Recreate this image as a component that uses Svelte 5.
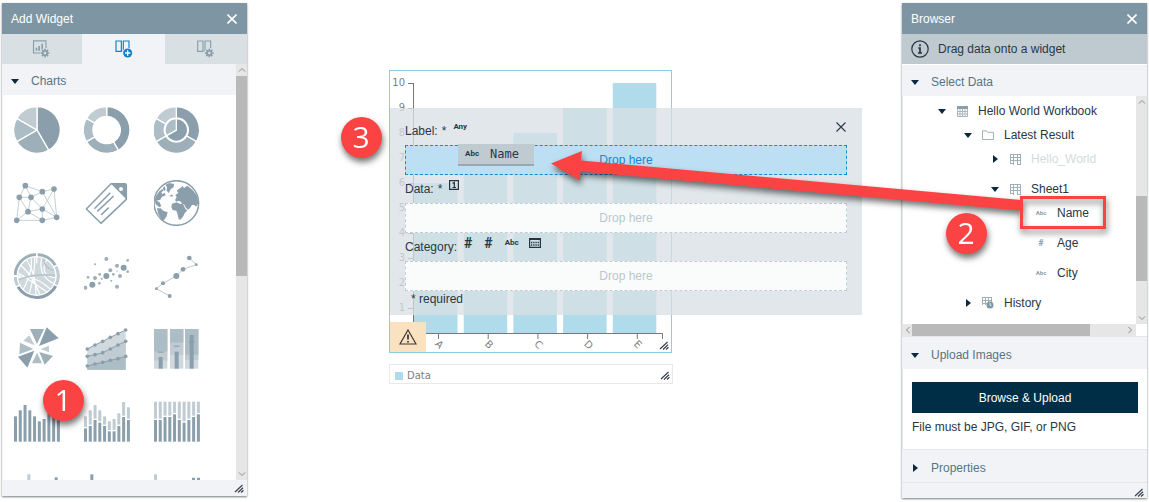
<script>
  const dark = '#8a9fab';
  const mid = '#9dafb9';
  const soft = '#adbdc5';
  const pale = '#c0cbd2';

  function sector(cx, cy, r0, r1, from, to) {
    const at = (r, deg) => {
      const t = ((deg - 90) * Math.PI) / 180;
      return `${(cx + r * Math.cos(t)).toFixed(2)} ${(cy + r * Math.sin(t)).toFixed(2)}`;
    };
    const big = to - from > 180 ? 1 : 0;
    const inner = r0 ? `L${at(r0, to)}A${r0} ${r0} 0 ${big} 0 ${at(r0, from)}` : `L${cx} ${cy}`;
    return `M${at(r1, from)}A${r1} ${r1} 0 ${big} 1 ${at(r1, to)}${inner}Z`;
  }

  const split = [[0, 150, dark], [150, 240, mid], [240, 300, soft], [300, 360, pale]];
  const ring = [[0, 120, dark], [120, 240, mid], [240, 300, soft], [300, 360, pale]];

  const nodes = [[76, 77], [162, 87], [127, 95], [58, 112], [93, 112], [84, 155], [127, 147], [50, 181], [127, 181], [170, 172]];
  const edges = [[0, 2], [0, 3], [0, 4], [1, 2], [2, 4], [3, 4], [3, 7], [3, 5], [4, 5], [4, 6], [5, 7], [5, 6], [5, 8], [6, 8], [7, 8], [8, 9], [6, 9], [2, 9], [1, 9], [1, 6]];

  const dots = [[319, 297, 6], [285, 313, 3], [383, 301, 4], [351, 317, 6], [371, 323, 9], [383, 335, 4], [331, 331, 6], [351, 333, 2], [319, 348, 9], [340, 343, 4], [360, 348, 6], [299, 343, 4], [285, 354, 6], [264, 352, 4], [305, 356, 3], [334, 362, 3], [298, 370, 4], [277, 374, 9], [256, 383, 6], [351, 380, 6]];
  const path = [[568, 294, 7], [589, 314, 4], [549, 328, 7], [529, 348, 9], [489, 370, 6], [469, 386, 4], [509, 408, 6]];

  const areaX = [262, 285, 308, 331, 354, 377];
  const areas = [
    { y: [87, 75, 64, 52, 41, 30], fill: '#d0d9de' },
    { y: [109, 104, 98, 87, 75, 64], fill: '#c0cbd2' },
    { y: [138, 132, 127, 121, 116, 109], fill: '#adbdc5' }
  ];
  const wedges = [
    ['90,27 132,27 111,72', mid], ['140,22 176,55 117,78', dark], ['147,77 147,97 122,87', pale],
    ['159,108 134,134 118,96', mid], ['111,98 126,130 96,130', soft], ['103,92 82,143 54,110', dark],
    ['100,87 60,68 58,103', soft], ['70,62 88,46 104,76', pale]
  ];
  const bullets = [[462, 95, 122, 111, 97], [510, 68, 105, 95, 79], [555, 104, 120, 45, 66]];

  const tall = [289, 271, 255, 271, 289, 304, 297, 280, 246, 262];
  const low = [325, 318, 300, 308, 318, 334, 334, 318, 291, 300];
  const full = [300, 300, 291, 291, 283, 300, 308, 300, 291, 283];

  const widgets = [
    ['Pie chart', 'pie', '42 321'], ['Donut chart', 'donut', '252 321'], ['Nested pie chart', 'nested', '462 321'],
    ['Network', 'network', '42 60'], ['Tag', 'tag', '252 60'], ['Map', 'globe', '462 60'],
    ['Chord', 'chord', '42 279'], ['Scatter plot', 'scatter', '252 279'], ['Connected scatter', 'connected', '462 279'],
    ['Rose chart', 'rose', '42 18'], ['Area chart', 'area', '252 18'], ['Bullet chart', 'bullet', '462 18'],
    ['Bar chart', 'bars', '42 237'], ['Stacked bars', 'stacked', '250 237'], ['Percent bars', 'percent', '460 237'],
    ['Histogram', 'more1', '42 456'], ['Range bars', 'more2', '252 456'], ['Grouped bars', 'more3', '460 456']
  ];

  const series = [['A', 6], ['B', 7], ['C', 8], ['D', 9], ['E', 10]];
  const ticks = [1, 2, 3, 4, 5, 6, 7, 8, 9, 10];

  const tree = [
    { label: 'Hello World Workbook', level: 0, icon: 'table', open: true },
    { label: 'Latest Result', level: 1, icon: 'folder', open: true },
    { label: 'Hello_World', level: 2, icon: 'sheet', open: false, muted: true },
    { label: 'Sheet1', level: 2, icon: 'sheet', open: true, gap: true },
    { label: 'Name', level: 3, icon: 'Abc' },
    { label: 'Age', level: 3, icon: '#', gap: true },
    { label: 'City', level: 3, icon: 'Abc', gap: true },
    { label: 'History', level: 1, icon: 'history', open: false, gap: true }
  ];
</script>

{#snippet grip()}
  <svg class="grip" viewBox="0 0 10 9" width="10" height="9" aria-hidden="true">
    <path d="M1 8 8.500 1M4 8.500 9 3.800M7 8.500 9.500 6.200" stroke="#39434f" stroke-width="1.200" fill="none" />
  </svg>
{/snippet}

{#snippet cross(weight)}
  <svg viewBox="0 0 10 10" width="10" height="10" aria-hidden="true">
    <path d="M.5 .5 9.500 9.500M9.500 .5 .5 9.500" stroke="currentColor" stroke-width={weight} fill="none" />
  </svg>
{/snippet}

{#snippet caret(open)}
  <svg class="caret" viewBox="0 0 8 8" width="8" height="8" aria-hidden="true">
    {#if open}<path d="M0 2H8L4 7Z" fill="#0b2a42" />{:else}<path d="M2 0V8L7 4Z" fill="#0b2a42" />{/if}
  </svg>
{/snippet}

{#snippet chevron(turn)}
  <svg viewBox="0 0 8 8" width="8" height="8" aria-hidden="true">
    <path d="M1 5.500 4 2.500 7 5.500" transform="rotate({turn} 4 4)" stroke="#8b8b8b" fill="none" />
  </svg>
{/snippet}

{#snippet gear(x, y, back)}
  <circle cx={x} cy={y} r="15" fill={back} />
  <circle cx={x} cy={y} r="6.500" fill="none" stroke={dark} stroke-width="5" />
  {#each [0, 45, 90, 135, 180, 225, 270, 315] as a}
    <rect x={x - 2.5} y={y - 13} width="5" height="6" fill={dark} transform="rotate({a} {x} {y})" />
  {/each}
{/snippet}

{#snippet typeIcon(name)}
  {#if name === 'table'}
    <svg viewBox="0 0 11 11" width="11" height="11" aria-hidden="true">
      <path d="M.5 .5H10.500V10.500H.5ZM3 3V10.500M5.500 3V10.500M8 3V10.500M.5 5.500H10.500M.5 8H10.500" fill="none" stroke="#a9b7bf" />
      <path d="M0 0H11V3H0Z" fill="#8a9fab" />
    </svg>
  {:else if name === 'folder'}
    <svg viewBox="0 0 12 10" width="12" height="10" aria-hidden="true">
      <path d="M.5 9.500V.8H4.500L5.500 2.300H11.500V9.500Z" fill="none" stroke="#a3b3bc" />
    </svg>
  {:else if name === 'sheet'}
    <svg viewBox="0 0 11 11" width="11" height="11" aria-hidden="true">
      <path d="M.5 0V10M3.500 0V11M7.500 0V11M10.500 0V10M0 .5H11M0 3.500H11M0 6.500H11M0 9.500H4M7 10.500H11" fill="none" stroke="#9fb0b9" />
    </svg>
  {:else if name === 'history'}
    <svg viewBox="0 0 12 12" width="12" height="12" aria-hidden="true">
      <path d="M.5 0V8M3.500 0V8M6.500 0V5M9.500 0V5M0 .5H10M0 3.500H10M0 6.500H5" fill="none" stroke="#9fb0b9" />
      <circle cx="8" cy="8" r="3.500" fill="#7f96a3" /><path d="M8 6V8.300H9.500" stroke="#fff" stroke-width=".8" fill="none" />
    </svg>
  {:else}
    <span class="kind" class:num={name === '#'}>{name}</span>
  {/if}
{/snippet}

{#snippet slices(list, cx, cy, r0, r1)}
  {#each list as [a, b, fill]}
    <path d={sector(cx, cy, r0, r1, a, b)} {fill} stroke="#fff" stroke-width="4" />
  {/each}
{/snippet}

{#snippet columns(x0, tops, bottom, fill)}
  {#each tops as top, i}
    <rect x={x0 + i * 14.3} y={top} width="9" height={(Array.isArray(bottom) ? bottom[i] - 4 : bottom) - top} {fill} />
  {/each}
{/snippet}

{#snippet picture(kind)}
  {#if kind === 'pie'}
    {@render slices(split, 111, 390, 0, 70)}
  {:else if kind === 'donut'}
    {@render slices(split, 320, 390, 41, 70)}
  {:else if kind === 'nested'}
    {@render slices(ring, 529, 390, 36, 70)}
    {@render slices([[0, 240, dark], [240, 360, soft]], 529, 390, 0, 34)}
  {:else if kind === 'network'}
    {#each edges as [a, b]}
      <line x1={nodes[a][0]} y1={nodes[a][1]} x2={nodes[b][0]} y2={nodes[b][1]} stroke="#c6d0d5" stroke-width="3" />
    {/each}
    {#each nodes as [x, y]}<circle cx={x} cy={y} r="8.500" fill={dark} />{/each}
  {:else if kind === 'tag'}
    <path d="M333 71H375Q379 71 379 75V118L303 190L259 147Z" fill="none" stroke={dark} stroke-width="4.500" stroke-linejoin="round" />
    <path d="M333 71H375Q379 71 379 75V118Z" fill={dark} />
    <circle cx="363" cy="87" r="6" fill="#fff" />
    <path d="M283 146 331 98M292 154 341 108M303 165 326 143" stroke={dark} stroke-width="4.500" fill="none" />
  {:else if kind === 'globe'}
    <circle cx="529" cy="129" r="67" fill="#fff" stroke={dark} stroke-width="4.500" />
    <path fill={dark} d="M541 84 548 78 552 84 562 77 578 90 590 106 596 128 588 140 582 134 575 136 570 145 563 149 557 142 552 133 545 131 543 125 535 122 530 125 525 121 530 111 526 106 535 98 530 92 535 88ZM516 131 530 127 541 132 549 132 557 148 562 151 554 160 549 170 541 179 536 178 533 164 529 152 518 150 514 141ZM471 145 482 145 490 152 503 157 500 169 492 181 487 183 481 173 474 160ZM469 122 478 126 484 138 478 142 467 133 464 120 468 108 478 94 487 87 490 93 484 96 487 103 494 98 497 106 485 111 481 119ZM496 74 508 69 522 72 521 81 512 88 506 99 500 92 501 82ZM488 84 494 79 497 89 492 94ZM512 104 519 105 517 110 510 109Z" />
  {:else if kind === 'chord'}
    <circle cx="110" cy="348" r="57" fill="#cfd8dc" />
    <path fill="none" stroke="#fff" stroke-width="3.500" d="M62 315Q100 350 120 404M80 300Q110 345 108 406M104 290Q106 340 88 400M125 292Q112 350 165 372M140 300Q115 345 167 354M54 352Q105 345 152 388M54 338Q90 360 142 397M93 294Q100 330 70 388" />
    <path fill="none" stroke="#b9c6cd" stroke-width="5" d="M130 294Q135 330 164 330M55 360Q100 340 166 346" />
    {@render slices([[0, 62, mid], [62, 116, pale], [116, 242, dark], [242, 270, pale], [270, 360, mid]], 110, 348, 58, 71)}
    <path d="M110 278V310M42 348H62" stroke="#fff" stroke-width="4" />
  {:else if kind === 'scatter'}
    {#each dots as [x, y, r]}<circle cx={x} cy={y} {r} fill={r > 6 ? dark : mid} />{/each}
  {:else if kind === 'connected'}
    <polyline points={path.map(([x, y]) => `${x},${y}`).join(' ')} fill="none" stroke="#bcc8cf" stroke-width="3" />
    {#each path as [x, y, r]}<circle cx={x} cy={y} {r} fill={dark} />{/each}
  {:else if kind === 'rose'}
    {#each wedges as [points, fill]}<polygon {points} {fill} />{/each}
  {:else if kind === 'area'}
    {#each areas as { y, fill }}
      <polygon points={`262,149 ${areaX.map((x, i) => `${x},${y[i]}`).join(' ')} 377,149`} {fill} />
    {/each}
    {#each areas as { y }}
      <polyline points={areaX.map((x, i) => `${x},${y[i]}`).join(' ')} fill="none" stroke={dark} stroke-width="3" />
      {#each areaX as x, i}<circle cx={x} cy={y[i]} r="5.500" fill={dark} />{/each}
    {/each}
  {:else if kind === 'bullet'}
    {#each bullets as [x, a, b, top, mark]}
      <rect {x} y="27" width="40" height="119" fill="#d0d9de" />
      <rect {x} y="27" width="40" height={b - 27} fill={pale} />
      <rect {x} y="27" width="40" height={a - 27} fill={soft} />
      <rect x={x + 14} y={top} width="12" height={146 - top} fill={dark} />
      <rect x={x + 11} y={mark - 2} width="18" height="3" fill={dark} />
    {/each}
  {:else if kind === 'bars'}
    {@render columns(42, tall, 365, dark)}
  {:else if kind === 'stacked'}
    {@render columns(250, tall, low, pale)}
    {@render columns(250, low, 365, dark)}
  {:else if kind === 'percent'}
    {@render columns(460, full.map(() => 245), full, pale)}
    {@render columns(460, full, 365, dark)}
  {:else if kind === 'more1'}
    <path d="M82 463H91V594H82Z" fill={pale} /><path d="M164 472H173V594H164Z" fill={dark} />
  {:else if kind === 'more2'}
    <path d="M271 463H280V594H271Z" fill={dark} />
  {:else}
    <path d="M460 463H469V594H460Z" fill={pale} /><path d="M574 473H583V594H574ZM589 473H598V594H589Z" fill={dark} />
  {/if}
{/snippet}

<main class="page">
  <section class="panel left" aria-label="Add Widget">
    <header class="title">
      <h2>Add Widget</h2>
      <button aria-label="Close">{@render cross(1.6)}</button>
    </header>
    <div class="tabs">
      <button aria-label="Widget settings">
        <svg viewBox="99 120 60 60" width="20" height="20" aria-hidden="true">
          <path d="M103.500 125.500H141V162H103.500Z" fill="none" stroke={dark} stroke-width="3.500" />
          <path d="M110 146H115V155H110ZM118 141H123V155H118ZM127 134H132V155H127Z" fill={dark} />
          {@render gear(138, 162, '#d9e0e4')}
        </svg>
      </button>
      <button class="on" aria-label="Add widget">
        <svg viewBox="342 120 60 60" width="20" height="20" aria-hidden="true">
          <path d="M348 126H364V157H348ZM370 126H387V157H370Z" fill="none" stroke="#0c82cc" stroke-width="3.500" />
          <circle cx="383" cy="162" r="16" fill="#f1f3f6" /><circle cx="383" cy="162" r="13.500" fill="#0c82cc" />
          <path d="M383 154V170M375 162H391" stroke="#fff" stroke-width="4" />
        </svg>
      </button>
      <button aria-label="Layout settings">
        <svg viewBox="590 120 60 60" width="20" height="20" aria-hidden="true">
          <path d="M595 126H611V157H595ZM617 126H634V157H617Z" fill="none" stroke={dark} stroke-width="3.500" />
          {@render gear(630, 162, '#d9e0e4')}
        </svg>
      </button>
    </div>
    <div class="scroller">
      <div class="content">
        <button class="section">{@render caret(true)}Charts</button>
        <div class="grid">
          {#each widgets as [label, kind, origin]}
            <button aria-label={label}>
              <svg viewBox="{origin} 138 138" width="46" height="46" aria-hidden="true">{@render picture(kind)}</svg>
            </button>
          {/each}
        </div>
      </div>
      <div class="bar">
        {@render chevron(0)}
        <div class="track"><i class="thumb" style="top:0%;height:51%"></i></div>
        {@render chevron(180)}
      </div>
    </div>
    <footer>{@render grip()}</footer>
  </section>

  <section class="canvas" aria-label="Canvas">
    <div class="chart">
      <svg viewBox="0 0 281 281" width="281" height="281" role="img" aria-label="Bar chart of Data">
        {#each series as [name, value], i}
          <rect x={24 + i * 49.7} y={262 - value * 25} width="43.500" height={value * 25} fill="#afdbea" />
          <path d="M{48.5 + i * 49.7} 262V268" class="axis" />
          <text x={48 + i * 49.7} y="270" transform="rotate(45 {48 + i * 49.7} 270)" dy="5">{name}</text>
        {/each}
        {#each ticks as t}
          <path d="M18 {262.5 - t * 25}H23" class="axis" />
          <text x="15" y={265 - t * 25} text-anchor="end">{t}</text>
        {/each}
        <path d="M23.500 12V262.500H272.500V268" class="axis" />
      </svg>
      <div class="warn">
        <svg viewBox="0 0 18 16" width="18" height="16" aria-hidden="true">
          <path d="M9 1 17 15H1Z" fill="none" stroke="#3d3a36" stroke-width="1.200" />
          <path d="M9 5.500V10.500M9 12V13.500" stroke="#3d3a36" stroke-width="1.800" />
        </svg>
      </div>
      {@render grip()}
    </div>
    <div class="legend"><i></i>Data{@render grip()}</div>

    <div class="mapping">
      <button class="close" aria-label="Close">{@render cross(1.1)}</button>
      <div class="field"><span>Label:</span><span>*</span><b class="any">Any</b></div>
      <div class="drop active">Drop here</div>
      <div class="field">
        <span>Data:</span><span>*</span>
        <svg class="kinds" viewBox="0 0 10 10" width="10" height="10" aria-hidden="true">
          <path d="M.6 .6H9.400V9.400H.6ZM3.500 3.300 5.300 2.500V7.500M3.500 7.500H7" fill="none" stroke="#27333f" stroke-width="1.200" />
        </svg>
      </div>
      <div class="drop">Drop here</div>
      <div class="field">
        <span>Category:</span>
        <b class="hash">#</b><b class="hash">#</b><b class="any">Abc</b>
        <svg class="kinds" viewBox="0 0 12 10" width="12" height="10" aria-hidden="true">
          <path d="M.6 .6H11.400V9.400H.6Z" fill="none" stroke="#27333f" stroke-width="1.200" />
          <path d="M0 1.200H12" stroke="#27333f" stroke-width="1.600" />
          <path d="M2 4.500H10M2 7H10" stroke="#27333f" stroke-width="1.500" stroke-dasharray="1.300 .9" />
        </svg>
      </div>
      <div class="drop">Drop here</div>
      <p>* required</p>
      <div class="chip"><b>Abc</b>Name</div>
    </div>
  </section>

  <section class="panel right" aria-label="Browser">
    <header class="title">
      <h2>Browser</h2>
      <button aria-label="Close">{@render cross(1.6)}</button>
    </header>
    <div class="info">
      <svg viewBox="0 0 18 18" width="18" height="18" aria-hidden="true">
        <circle cx="9" cy="9" r="8.200" fill="none" stroke="#27333f" stroke-width="1.200" />
        <path d="M9 4.200V6.200M7.300 8H9V13M7 13H11" fill="none" stroke="#27333f" stroke-width="1.700" />
      </svg>
      Drag data onto a widget
    </div>
    <button class="section">{@render caret(true)}Select Data</button>
    <div class="browse">
      <ul class="tree">
        {#each tree as row}
          <li class="level{row.level}" class:muted={row.muted} class:gap={row.gap}>
            {#if row.level < 3}{@render caret(row.open)}{/if}
            <span class="icon">{@render typeIcon(row.icon)}</span>
            <span>{row.label}</span>
          </li>
        {/each}
      </ul>
      <div class="bar">
        {@render chevron(0)}
        <div class="track"><i class="thumb" style="top:43%;height:42%"></i></div>
        {@render chevron(180)}
      </div>
      <div class="hbar">
        {@render chevron(270)}
        <div class="track"><i class="thumb" style="left:0;width:83%"></i></div>
        {@render chevron(90)}
      </div>
    </div>
    <button class="section ruled">{@render caret(true)}Upload Images</button>
    <div class="upload">
      <button>Browse &amp; Upload</button>
      <p>File must be JPG, GIF, or PNG</p>
    </div>
    <button class="section ruled">{@render caret(false)}Properties</button>
    <footer class="ruled">{@render grip()}</footer>
  </section>

  <svg class="notes" width="1149" height="502" aria-hidden="true">
    <rect x="1021.500" y="197.500" width="83" height="30" fill="none" stroke="#fc4343" stroke-width="3" />
    <g fill="#fc4343">
      <path d="M551 163.500 582 151 581 160.500 1018.500 199.800A5.300 5.300 0 0 1 1017.500 210.300L580.500 171.500 580 180.500Z" />
      <circle cx="63.500" cy="400.500" r="20.500" />
      <circle cx="966.500" cy="233.500" r="20.500" />
      <circle cx="361.500" cy="137.500" r="20.500" />
    </g>
    <g class="digit">
      <text x="63" y="411">1</text>
      <text x="966" y="244">2</text>
      <text x="361" y="148">3</text>
    </g>
  </svg>
</main>

<style>
  :global(body) { margin: 0; background: #fff; }
  * { box-sizing: border-box; }
  .page {
    position: relative; display: flex; height: 100vh; min-height: 480px; padding: 3px 2px 4px; overflow: hidden;
    font: 12px/16px "Liberation Sans", Arial, sans-serif; color: #2a3744;
  }
  button { margin: 0; padding: 0; border: 0; background: none; font: inherit; color: inherit; cursor: pointer; }
  svg { display: block; flex: none; }
  h2, p { margin: 0; font: inherit; }
  .panel { display: flex; flex: none; flex-direction: column; width: 245px; background: #fff; box-shadow: 0 1px 2px #777c80; }
  .left { margin-bottom: 2px; }
  .title { display: flex; flex: none; align-items: center; justify-content: space-between; height: 31px; padding: 0 10px 0 9px; background: #7e96a4; color: #fff; }
  .tabs { display: grid; flex: none; grid-template-columns: 80fr 83fr 82fr; height: 30px; }
  .tabs button { display: grid; place-items: center; background: #d9e0e4; }
  .tabs .on { background: #f1f3f6; }
  .section { display: flex; flex: none; align-items: center; gap: 12px; width: 100%; height: 31px; padding: 2px 9px 0; background: #f1f3f6; color: #5a7484; text-align: left; }
  .ruled { border-top: 1px solid #e4e8eb; height: 33px; }
  .scroller { display: flex; flex: 1; min-height: 0; }
  .content { display: flex; flex: 1; flex-direction: column; min-width: 0; overflow: hidden; border-left: 1px solid #f1f3f6; }
  .content .section { padding-left: 8px; }
  .grid { display: grid; grid-template-columns: repeat(3, 46px); gap: 27px 24px; padding: 12px 11px; }
  .bar { display: flex; flex-direction: column; align-items: center; width: 11px; padding: 2px 0; background: #e6e6e6; }
  .track { position: relative; flex: 1; align-self: stretch; margin: 2px 0; }
  .thumb { position: absolute; width: 100%; height: 100%; background: #b9b9b9; }
  footer { display: flex; flex: none; align-items: center; justify-content: flex-end; height: 16px; padding-right: 3px; background: #f1f3f6; }
  footer.ruled { height: 16px; }

  .canvas { position: relative; flex: 1; min-width: 0; }
  .chart { position: absolute; left: 142px; top: 67px; width: 283px; border: 1px solid #8ccde6; }
  .chart text { font: 10px "DejaVu Sans", sans-serif; fill: #808080; }
  .axis { fill: none; stroke: #777; }
  .warn { position: absolute; left: 0; bottom: 0; display: grid; place-items: center; width: 36px; height: 30px; background: #fae1bf; }
  .chart > :global(.grip) { position: absolute; right: 2px; bottom: 2px; }
  .legend { position: absolute; left: 142px; top: 361px; display: flex; align-items: center; gap: 4px; width: 284px; height: 20px; padding: 3px 2px 0 5px; border: 1px solid #e9e9e9; font: 10px/12px "DejaVu Sans", sans-serif; color: #808080; }
  .legend i { width: 8px; height: 8px; background: #afdbea; }
  .legend :global(.grip) { margin-left: auto; }

  .mapping { position: absolute; left: 143px; top: 105px; width: 472px; padding: 9px 15px 0; background: rgb(216 224 228 / .76); }
  .mapping .close { position: absolute; right: 16px; top: 14px; }
  .field { display: flex; align-items: center; gap: 4px; height: 28px; }
  .field span + span { line-height: 12px; }
  .any, .hash, .kinds { margin: 0 3px 9px; }
  .any, .chip b { font: bold 8px/8px Roboto, sans-serif; }
  .hash { margin-right: 5px; font: bold 14px/10px Roboto, sans-serif; }
  .drop { display: grid; place-items: center; height: 30px; border: 1px dashed #c2cdd3; background: #fafcfc; color: #b9c7cf; }
  .active { border-color: #1889cc; background: #bddff3; color: #1787cf; }
  .mapping p { height: 24px; padding-left: 6px; }
  .chip { position: absolute; left: 68px; top: 36px; display: flex; align-items: center; gap: 11px; height: 22px; width: 76px; padding-left: 7px; background: #bfcbd1; border-bottom: 2px solid #98a8b2; font: 12px/16px "DejaVu Sans Mono", monospace; }

  .info { display: flex; flex: none; align-items: center; gap: 9px; height: 30px; padding: 0 9px; background: #bfcad0; }
  .right .section { margin-top: 1px; }
  .right .ruled { margin-top: 0; padding-top: 3px; }
  .browse { display: grid; flex: 1; grid-template: 1fr 12px / 1fr 11px; min-height: 0; }
  .tree { margin: 0; padding: 3px 0 0; list-style: none; overflow: hidden; white-space: nowrap; border-left: 1px solid #e4e8eb; }
  .tree li { display: flex; align-items: center; height: 24px; }
  .tree .gap { margin-top: 6px; }
  .level0 { padding-left: 35px; }
  .level1 { padding-left: 61px; }
  .level2 { padding-left: 88px; }
  .level3 { padding-left: 122px; }
  .icon { display: grid; place-items: center; width: 32px; }
  .muted { color: #d3dbdf; }
  .kind { font: bold 6px/8px Roboto, sans-serif; color: #8a9fab; }
  .num { font-size: 9px; }
  .hbar { display: flex; align-items: center; padding: 0 2px; background: #e6e6e6; }
  .hbar .track { margin: 0; }
  .upload { flex: none; height: 80px; padding: 13px 9px 0; border-left: 1px solid #e4e8eb; }
  .upload button { width: 100%; height: 31px; background: #002e47; color: #fff; }
  .upload p { margin-top: 6px; }

  .notes { position: absolute; left: 0; top: 0; pointer-events: none; filter: drop-shadow(1px 4px 3px rgb(0 0 0 / .55)); }
  .digit { font: 30px "Open Sans", sans-serif; fill: #fff; text-anchor: middle; }
</style>
